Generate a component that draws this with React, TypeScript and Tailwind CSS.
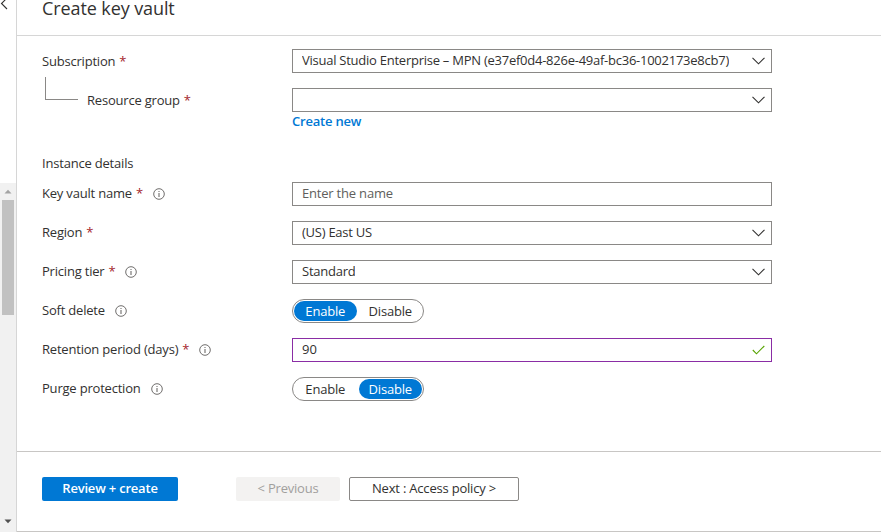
import React from 'react'

const font = { fontFamily: '"Open Sans", "Liberation Sans", sans-serif' }

function Chevron() {
  return (
    <svg width="13" height="8" viewBox="0 0 13 8" className="shrink-0">
      <path d="M0.5 0.8 L6.5 6.8 L12.5 0.8" fill="none" stroke="#323130" strokeWidth="1.1" />
    </svg>
  )
}

function Info() {
  return (
    <svg width="12" height="12" viewBox="0 0 12 12" className="shrink-0">
      <circle cx="6" cy="6" r="5.3" fill="none" stroke="#605e5c" strokeWidth="0.9" />
      <rect x="5.5" y="5" width="1" height="4" fill="#605e5c" />
      <rect x="5.5" y="3" width="1" height="1" fill="#605e5c" />
    </svg>
  )
}

function Req() {
  return <span className="text-[#a4262c] ml-[4px]">*</span>
}

function Label({ text, req, info }: { text: string; req?: boolean; info?: boolean }) {
  return (
    <div className="flex items-center text-[13px] tracking-[-0.2px] text-[#323130]">
      <span>{text}</span>
      {req && <Req />}
      {info && (
        <span className="ml-[10px] flex items-center">
          <Info />
        </span>
      )}
    </div>
  )
}

function Select({ value }: { value?: string }) {
  return (
    <div className="h-[24px] w-[480px] border border-[#8a8886] flex items-center justify-between pl-[9px] pr-[6px] text-[13px] tracking-[-0.25px] text-[#323130]">
      <span className="truncate">{value}</span>
      <Chevron />
    </div>
  )
}

function Toggle({ on }: { on: boolean }) {
  return (
    <div className="h-[24px] w-[132px] border border-[#8a8886] rounded-full flex items-center px-[1px] text-[13px] tracking-[-0.2px]">
      <div className={`h-[20px] w-[63px] pt-[1px] rounded-full flex items-center justify-center ${on ? 'bg-[#0078d4] text-white' : 'text-[#323130]'}`}>Enable</div>
      <div className={`h-[20px] w-[64px] pt-[1px] ml-[2px] rounded-full flex items-center justify-center ${!on ? 'bg-[#0078d4] text-white' : 'text-[#323130]'}`}>Disable</div>
    </div>
  )
}

function Row({ label, children, className = '' }: { label: React.ReactNode; children: React.ReactNode; className?: string }) {
  return (
    <div className={`flex items-center h-[24px] ${className}`}>
      <div className="w-[250px] shrink-0">{label}</div>
      {children}
    </div>
  )
}

export default function App() {
  return (
    <div className="w-[881px] h-[532px] bg-white flex overflow-hidden" style={font}>
      {/* left strip w/ scrollbar */}
      <div className="w-[17px] shrink-0 border-r border-[#d6d6d6] flex flex-col">
        <div className="h-[183px] bg-white">
          <svg width="8" height="12" viewBox="0 0 8 12" className="-mt-[2px]">
            <path d="M7 0 L1.5 5.5 L7 11" fill="none" stroke="#323130" strokeWidth="1.1" />
          </svg>
        </div>
        <div className="flex-1 bg-[#f1f1f1] flex flex-col items-center">
          <svg width="8" height="5" viewBox="0 0 8 5" className="mt-[6px]">
            <path d="M0.5 4.5 L4 0.8 L7.5 4.5 Z" fill="#a3a3a3" />
          </svg>
          <div className="mt-[6px] w-[12px] h-[115px] bg-[#c1c1c1]" />
          <div className="flex-1" />
          <svg width="8" height="5" viewBox="0 0 8 5" className="mb-[8px]">
            <path d="M0.5 0.5 L4 4.2 L7.5 0.5 Z" fill="#505050" />
          </svg>
        </div>
      </div>

      {/* main */}
      <div className="flex-1 flex flex-col border-b border-[#c8c6c4]">
        <div className="h-[36px] border-b border-[#d6d6d6] pl-[25px] overflow-hidden">
          <div className="text-[18px] leading-[18px] tracking-[-0.1px] text-[#323130] -mt-[1px]">Create key vault</div>
        </div>

        <div className="h-[415px] pl-[25px] pt-[13px]">
          <Row label={<div className="pt-[1px]"><Label text="Subscription" req /></div>}>
            <Select value="Visual Studio Enterprise – MPN (e37ef0d4-826e-49af-bc36-1002173e8cb7)" />
          </Row>
          <Row
            className="mt-[15px]"
            label={
              <div className="flex items-center">
                <div className="self-start -mt-[13px] ml-[3px] w-[33px] h-[23px] border-l border-b border-[#8a8886]" />
                <div className="ml-[9px] pt-[1px]">
                  <Label text="Resource group" req />
                </div>
              </div>
            }
          >
            <Select />
          </Row>
          <div className="pl-[250px] mt-[0px] text-[13px] tracking-[-0.2px] leading-[18px] font-semibold text-[#0078d4]">Create new</div>

          <div className="mt-[25px] text-[13px] tracking-[-0.2px] leading-[16px] text-[#323130]">Instance details</div>

          <Row className="mt-[11px]" label={<Label text="Key vault name" req info />}>
            <div className="h-[24px] w-[480px] border border-[#8a8886] flex items-center pl-[9px] text-[13px] tracking-[-0.2px] text-[#605e5c]">Enter the name</div>
          </Row>
          <Row className="mt-[15px]" label={<Label text="Region" req />}>
            <Select value="(US) East US" />
          </Row>
          <Row className="mt-[15px]" label={<Label text="Pricing tier" req info />}>
            <Select value="Standard" />
          </Row>
          <Row className="mt-[15px]" label={<Label text="Soft delete" info />}>
            <Toggle on />
          </Row>
          <Row className="mt-[15px]" label={<Label text="Retention period (days)" req info />}>
            <div className="h-[24px] w-[480px] border border-[#8a2da5] flex items-center justify-between pl-[9px] pr-[6px] text-[13px] text-[#323130]">
              <span>90</span>
              <svg width="13" height="10" viewBox="0 0 13 10">
                <path d="M0.8 5 L4.5 8.8 L12.3 1" fill="none" stroke="#57a300" strokeWidth="1.1" />
              </svg>
            </div>
          </Row>
          <Row className="mt-[15px]" label={<Label text="Purge protection" info />}>
            <Toggle on={false} />
          </Row>
        </div>

        <div className="flex-1 border-t border-[#c8c6c4] pl-[25px] pt-[25px] flex items-start text-[13px] tracking-[-0.2px]">
          <button className="h-[24px] w-[136px] bg-[#0078d4] rounded-[2px] text-white font-semibold">Review + create</button>
          <button className="ml-[58px] h-[24px] w-[104px] bg-[#f3f2f1] rounded-[2px] text-[#a19f9d]">&lt; Previous</button>
          <button className="ml-[9px] h-[24px] w-[170px] border border-[#8a8886] rounded-[2px] text-[#323130]">Next : Access policy &gt;</button>
        </div>
      </div>
    </div>
  )
}
